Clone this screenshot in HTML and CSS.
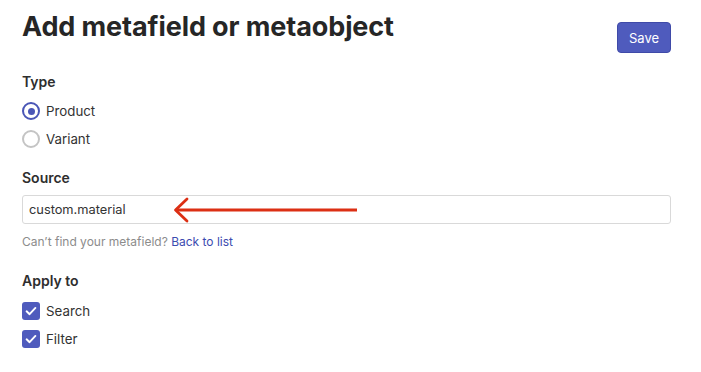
FILE: index.html
```html
<!DOCTYPE html>
<html lang="en">
<head>
<meta charset="utf-8">
<title>Add metafield or metaobject</title>
<link rel="stylesheet" href="styles.css">
</head>
<body>
<div class="page">
  <div class="header">
    <h1 class="title">Add metafield or metaobject</h1>
    <button class="save">Save</button>
  </div>

  <div class="group group-type">
    <div class="label">Type</div>
    <div class="option">
      <span class="radio checked"></span>
      <span class="opt-text">Product</span>
    </div>
    <div class="option">
      <span class="radio"></span>
      <span class="opt-text">Variant</span>
    </div>
  </div>

  <div class="group group-source">
    <div class="label">Source</div>
    <div class="field">
      <div class="input">custom.material</div>
      <svg class="arrow" width="186" height="26" viewBox="0 0 186 26">
        <path d="M184 13 H3" stroke="#dc2f14" stroke-width="2.8" fill="none"/>
        <path d="M14 2 L2.5 13 L14 24" stroke="#dc2f14" stroke-width="2.8" fill="none" stroke-linecap="round" stroke-linejoin="round"/>
      </svg>
    </div>
    <div class="help">Can’t find your metafield? <a class="link" href="#">Back to list</a></div>
  </div>

  <div class="group group-apply">
    <div class="label">Apply to</div>
    <div class="option">
      <span class="checkbox">
        <svg width="18" height="18" viewBox="0 0 18 18"><path d="M4.6 9.3 L7.6 12.2 L13.4 5.9" stroke="#fff" stroke-width="1.9" fill="none" stroke-linecap="round" stroke-linejoin="round"/></svg>
      </span>
      <span class="opt-text">Search</span>
    </div>
    <div class="option">
      <span class="checkbox">
        <svg width="18" height="18" viewBox="0 0 18 18"><path d="M4.6 9.3 L7.6 12.2 L13.4 5.9" stroke="#fff" stroke-width="1.9" fill="none" stroke-linecap="round" stroke-linejoin="round"/></svg>
      </span>
      <span class="opt-text">Filter</span>
    </div>
  </div>
</div>
</body>
</html>
```

FILE: styles.css
```css
* { box-sizing: border-box; }
html, body { margin: 0; padding: 0; background: #fff; }
body {
  font-family: Inter, "Noto Sans", "Liberation Sans", sans-serif;
  color: #303030;
}
.page {
  width: 701px;
  padding: 11px 30px 0 22px;
  display: flex;
  flex-direction: column;
}
.header {
  display: flex;
  justify-content: space-between;
  align-items: flex-start;
  height: 33px;
}
.title {
  margin: 0;
  font-size: 27px;
  line-height: 32px;
  font-weight: 700;
  color: #262626;
  letter-spacing: -0.1px;
}
.save {
  margin-top: 11px;
  width: 54px;
  height: 31px;
  border: 1px solid #3f4aa8;
  border-radius: 4px;
  background: #4f5bbd;
  color: #fff;
  font-family: inherit;
  font-size: 13px;
  padding: 0;
}
.label {
  font-size: 14px;
  line-height: 20px;
  font-weight: 600;
  color: #2e2e2e;
}
.group-type { margin-top: 28px; }
.group-type .label { margin-bottom: 5px; }
.group-source { margin-top: 15px; }
.group-apply { margin-top: 20px; }
.group-apply .label { margin-bottom: 6px; }
.option {
  display: flex;
  align-items: center;
  height: 28px;
  gap: 6px;
}
.opt-text {
  font-size: 13.3px;
  color: #333;
}
.radio {
  width: 18px;
  height: 18px;
  border-radius: 50%;
  border: 2px solid #c4c4c4;
  display: flex;
  align-items: center;
  justify-content: center;
}
.radio.checked { border-color: #4a56b6; }
.radio.checked::after {
  content: "";
  width: 7px;
  height: 7px;
  border-radius: 50%;
  background: #4a56b6;
}
.checkbox {
  width: 18px;
  height: 18px;
  border-radius: 3px;
  background: #4f5bbd;
  display: flex;
}
.field {
  position: relative;
  margin-top: 7px;
}
.input {
  height: 29px;
  border: 1px solid #d9d9d9;
  border-radius: 3px;
  padding: 0 6px;
  display: flex;
  align-items: center;
  font-size: 12.8px;
  color: #333;
}
.arrow {
  position: absolute;
  left: 151px;
  top: 2px;
}
.help {
  margin-top: 9px;
  font-size: 12px;
  line-height: 18px;
  color: #8c8c8c;
}
.link {
  color: #3c4bb0;
  text-decoration: none;
}
```
